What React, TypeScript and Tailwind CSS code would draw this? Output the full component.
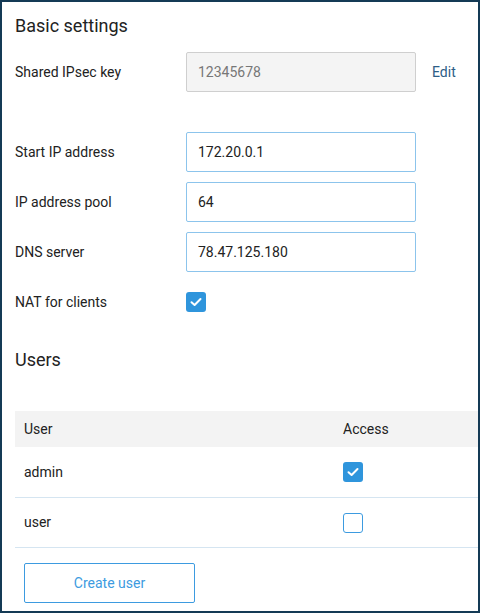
import React from "react";

const Check = ({ checked }: { checked: boolean }) =>
  checked ? (
    <div className="w-[20px] h-[20px] rounded-[3px] bg-[#2f95dc] flex items-center justify-center">
      <svg width="12" height="10" viewBox="0 0 12 10" fill="none">
        <path d="M1.5 5.2 L4.6 8 L10.5 2" stroke="white" strokeWidth="2" strokeLinecap="round" strokeLinejoin="round" />
      </svg>
    </div>
  ) : (
    <div className="w-[20px] h-[20px] rounded-[3px] border border-[#3d9be0] bg-white" />
  );

const Row = ({ label, children }: { label: string; children: React.ReactNode }) => (
  <div className="flex items-center h-[40px]">
    <div className="w-[171px] shrink-0 text-[14px] text-[#222]">{label}</div>
    {children}
  </div>
);

const Input = ({ value }: { value: string }) => (
  <div className="w-[230px] h-[40px] border border-[#8cc4ec] rounded-[2px] flex items-center pl-[11px] text-[14px] text-[#222] bg-white">
    {value}
  </div>
);

export default function App() {
  return (
    <div
      className="w-[480px] h-[613px] border-2 border-[#143a55] bg-white pl-[13px] pt-[12px] overflow-hidden"
      style={{ fontFamily: "Roboto, 'Liberation Sans', sans-serif" }}
    >
      <div className="text-[18px] leading-[24px] text-[#222]">Basic settings</div>
      <div className="mt-[14px]">
        <Row label="Shared IPsec key">
          <div className="w-[230px] h-[40px] border border-[#cfcfcf] rounded-[2px] flex items-center pl-[11px] text-[14px] text-[#777] bg-[#f4f4f4]">
            12345678
          </div>
          <div className="ml-[16px] text-[14px] text-[#2d5d86]">Edit</div>
        </Row>
      </div>
      <div className="mt-[40px] flex flex-col gap-[10px]">
        <Row label="Start IP address">
          <Input value="172.20.0.1" />
        </Row>
        <Row label="IP address pool">
          <Input value="64" />
        </Row>
        <Row label="DNS server">
          <Input value="78.47.125.180" />
        </Row>
        <Row label="NAT for clients">
          <Check checked={true} />
        </Row>
      </div>
      <div className="mt-[26px] text-[18px] leading-[24px] text-[#222]">Users</div>
      <div className="mt-[39px] text-[14px] text-[#222]">
        <div className="grid grid-cols-[319px_1fr] h-[36px] items-center bg-[#f3f3f3] pl-[9px]">
          <div>User</div>
          <div>Access</div>
        </div>
        <div className="grid grid-cols-[319px_1fr] h-[51px] items-center pl-[9px] border-b border-[#d5e5f1]">
          <div>admin</div>
          <Check checked={true} />
        </div>
        <div className="grid grid-cols-[319px_1fr] h-[50px] items-center pl-[9px] border-b border-[#d5e5f1]">
          <div>user</div>
          <Check checked={false} />
        </div>
      </div>
      <div className="mt-[15px] ml-[9px] w-[171px] h-[40px] border border-[#3d9be0] rounded-[2px] flex items-center justify-center text-[14px] text-[#3d9be0]">
        Create user
      </div>
    </div>
  );
}
